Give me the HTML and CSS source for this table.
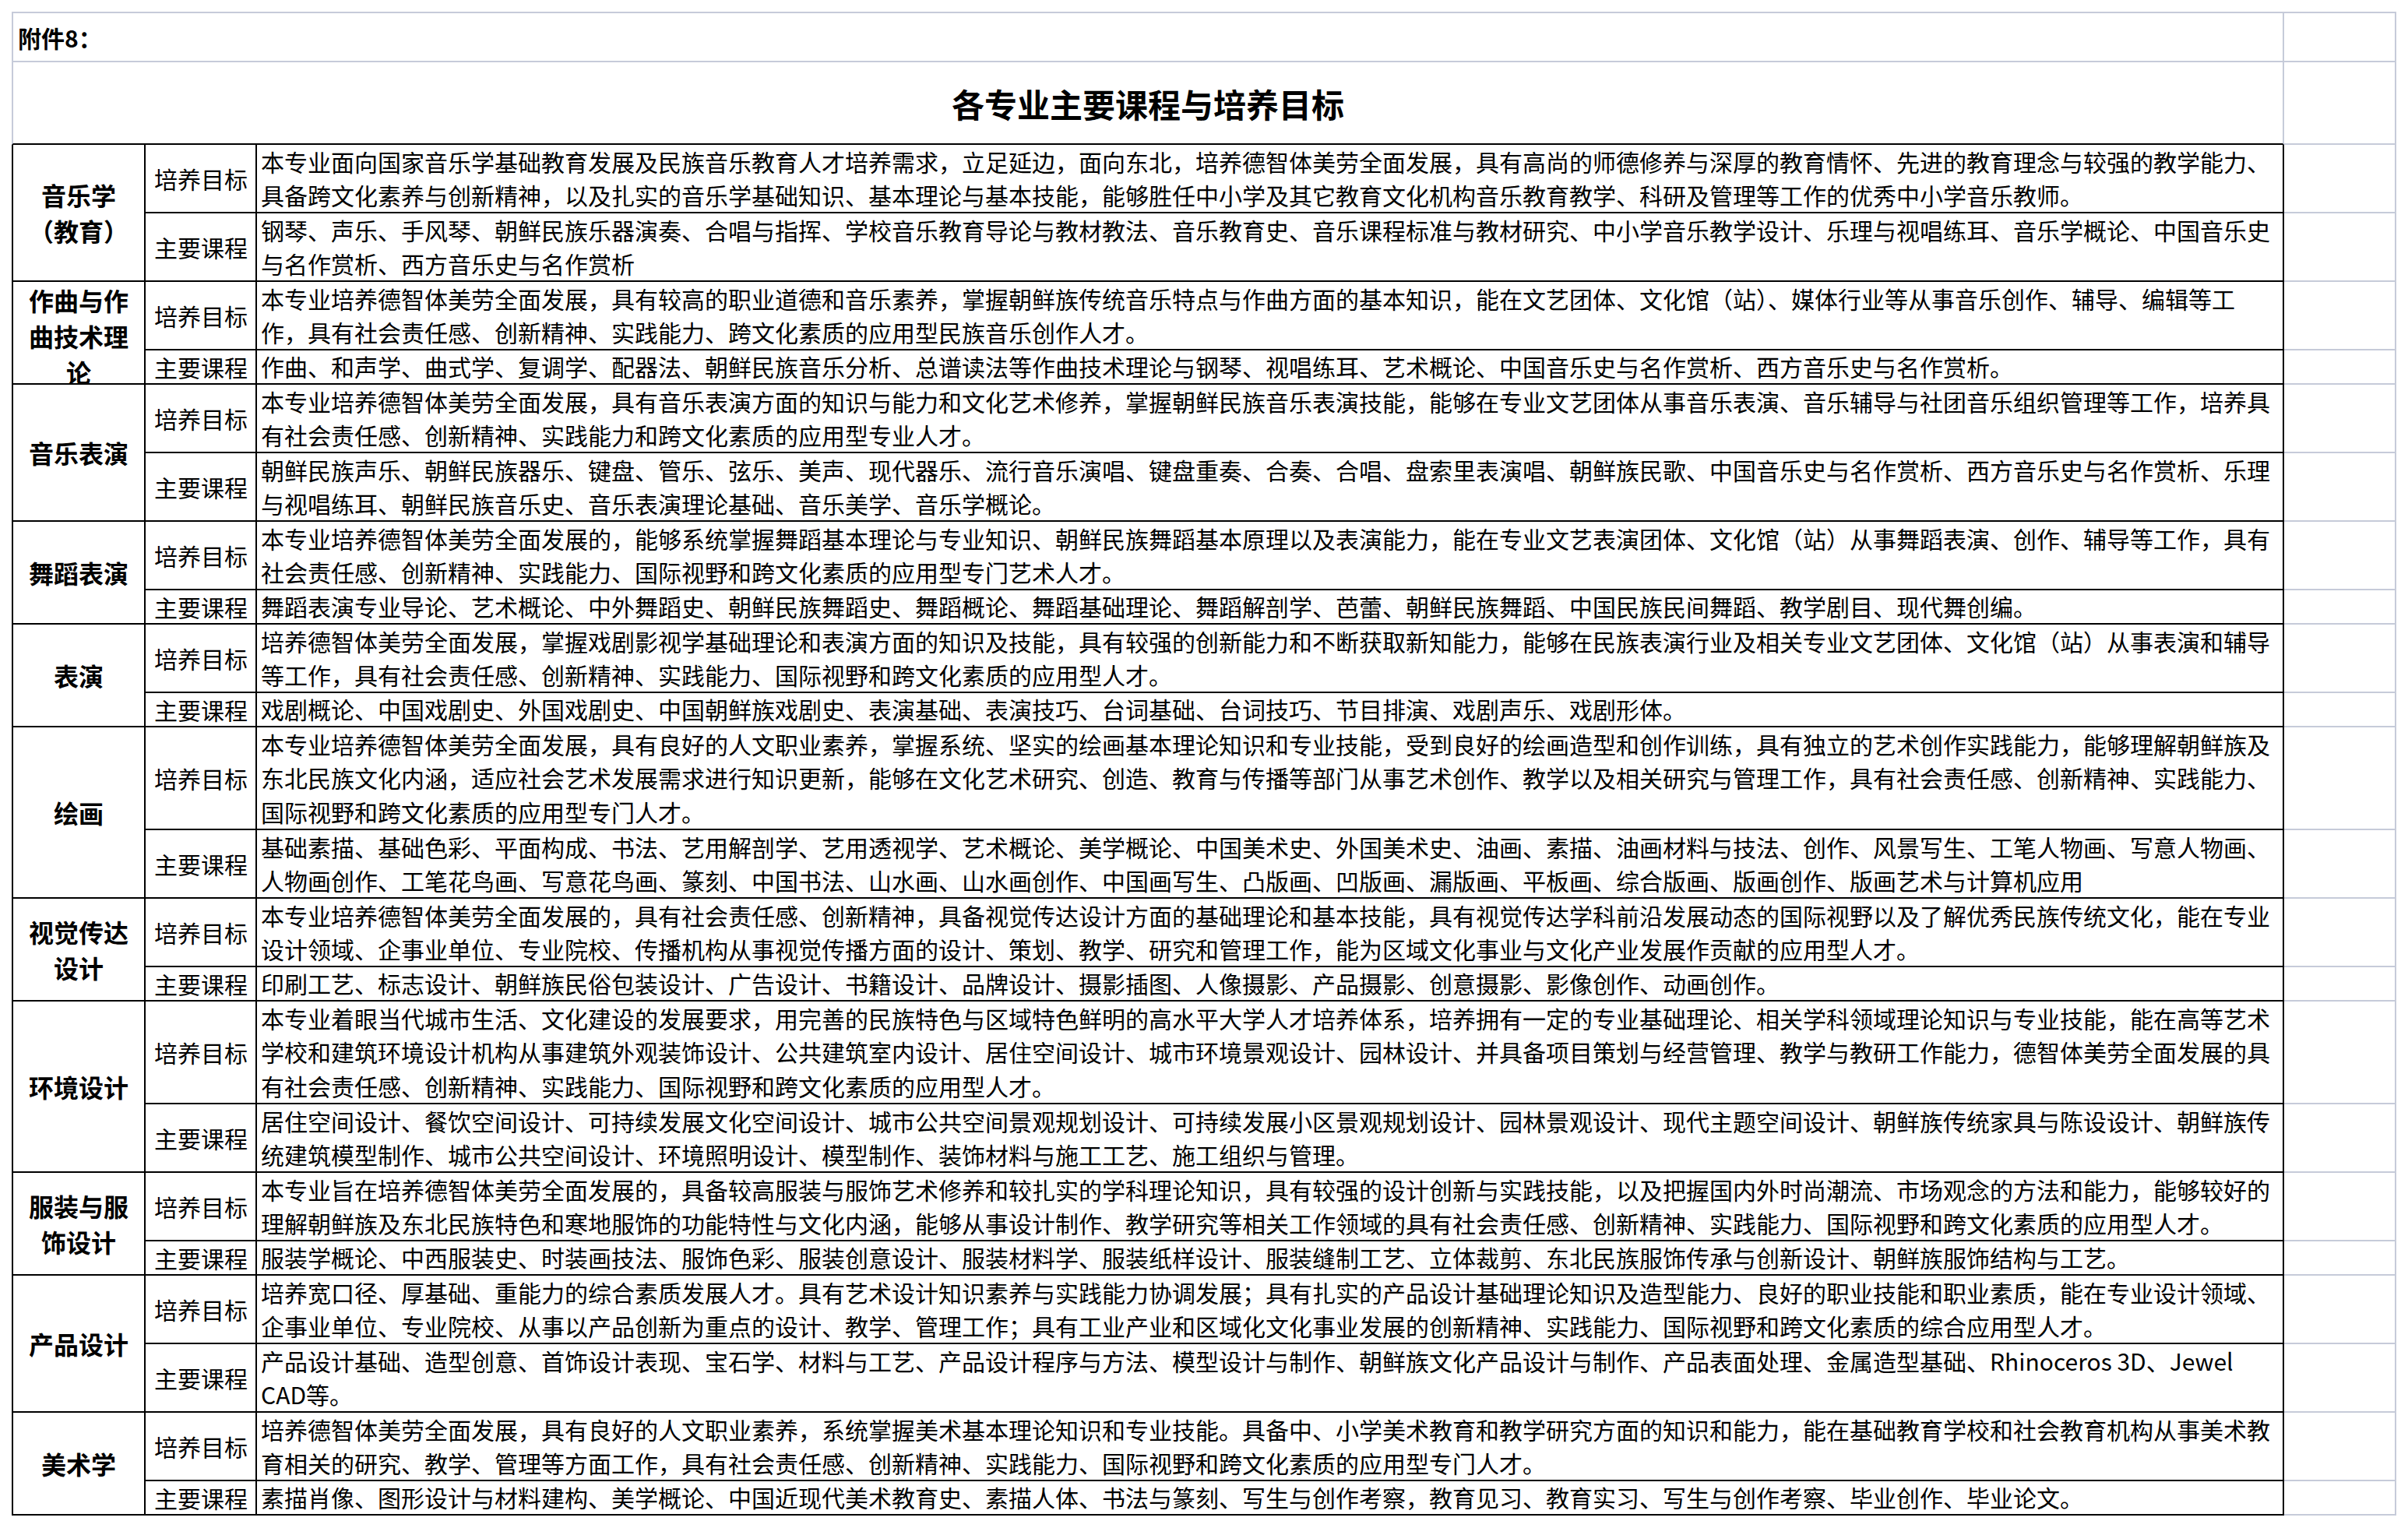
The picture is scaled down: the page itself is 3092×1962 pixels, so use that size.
FILE: index.html
```html
<!DOCTYPE html>
<html lang="zh-CN">
<head>
<meta charset="utf-8">
<title>各专业主要课程与培养目标</title>
<link rel="stylesheet" href="styles.css">
</head>
<body>
<div class="sheet">
  <div class="hdr top note">附件8：</div>
  <div class="x top"></div>
  <div class="hdr title">各专业主要课程与培养目标</div>
  <div class="x"></div>

  <div class="cat">音乐学<br>（教育）</div>
  <div class="lbl">培养目标</div>
  <div class="txt"><p>本专业面向国家音乐学基础教育发展及民族音乐教育人才培养需求，立足延边，面向东北，培养德智体美劳全面发展，具有高尚的师德修养与深厚的教育情怀、先进的教育理念与较强的教学能力、<br>具备跨文化素养与创新精神，以及扎实的音乐学基础知识、基本理论与基本技能，能够胜任中小学及其它教育文化机构音乐教育教学、科研及管理等工作的优秀中小学音乐教师。</p></div>
  <div class="x"></div>
  <div class="lbl">主要课程</div>
  <div class="txt"><p>钢琴、声乐、手风琴、朝鲜民族乐器演奏、合唱与指挥、学校音乐教育导论与教材教法、音乐教育史、音乐课程标准与教材研究、中小学音乐教学设计、乐理与视唱练耳、音乐学概论、中国音乐史<br>与名作赏析、西方音乐史与名作赏析</p></div>
  <div class="x"></div>

  <div class="cat clip">作曲与作<br>曲技术理<br>论</div>
  <div class="lbl">培养目标</div>
  <div class="txt"><p>本专业培养德智体美劳全面发展，具有较高的职业道德和音乐素养，掌握朝鲜族传统音乐特点与作曲方面的基本知识，能在文艺团体、文化馆（站）、媒体行业等从事音乐创作、辅导、编辑等工<br>作，具有社会责任感、创新精神、实践能力、跨文化素质的应用型民族音乐创作人才。</p></div>
  <div class="x"></div>
  <div class="lbl">主要课程</div>
  <div class="txt"><p>作曲、和声学、曲式学、复调学、配器法、朝鲜民族音乐分析、总谱读法等作曲技术理论与钢琴、视唱练耳、艺术概论、中国音乐史与名作赏析、西方音乐史与名作赏析。</p></div>
  <div class="x"></div>

  <div class="cat">音乐表演</div>
  <div class="lbl">培养目标</div>
  <div class="txt"><p>本专业培养德智体美劳全面发展，具有音乐表演方面的知识与能力和文化艺术修养，掌握朝鲜民族音乐表演技能，能够在专业文艺团体从事音乐表演、音乐辅导与社团音乐组织管理等工作，培养具<br>有社会责任感、创新精神、实践能力和跨文化素质的应用型专业人才。</p></div>
  <div class="x"></div>
  <div class="lbl">主要课程</div>
  <div class="txt"><p>朝鲜民族声乐、朝鲜民族器乐、键盘、管乐、弦乐、美声、现代器乐、流行音乐演唱、键盘重奏、合奏、合唱、盘索里表演唱、朝鲜族民歌、中国音乐史与名作赏析、西方音乐史与名作赏析、乐理<br>与视唱练耳、朝鲜民族音乐史、音乐表演理论基础、音乐美学、音乐学概论。</p></div>
  <div class="x"></div>

  <div class="cat">舞蹈表演</div>
  <div class="lbl">培养目标</div>
  <div class="txt"><p>本专业培养德智体美劳全面发展的，能够系统掌握舞蹈基本理论与专业知识、朝鲜民族舞蹈基本原理以及表演能力，能在专业文艺表演团体、文化馆（站）从事舞蹈表演、创作、辅导等工作，具有<br>社会责任感、创新精神、实践能力、国际视野和跨文化素质的应用型专门艺术人才。</p></div>
  <div class="x"></div>
  <div class="lbl">主要课程</div>
  <div class="txt"><p>舞蹈表演专业导论、艺术概论、中外舞蹈史、朝鲜民族舞蹈史、舞蹈概论、舞蹈基础理论、舞蹈解剖学、芭蕾、朝鲜民族舞蹈、中国民族民间舞蹈、教学剧目、现代舞创编。</p></div>
  <div class="x"></div>

  <div class="cat">表演</div>
  <div class="lbl">培养目标</div>
  <div class="txt"><p>培养德智体美劳全面发展，掌握戏剧影视学基础理论和表演方面的知识及技能，具有较强的创新能力和不断获取新知能力，能够在民族表演行业及相关专业文艺团体、文化馆（站）从事表演和辅导<br>等工作，具有社会责任感、创新精神、实践能力、国际视野和跨文化素质的应用型人才。</p></div>
  <div class="x"></div>
  <div class="lbl">主要课程</div>
  <div class="txt"><p>戏剧概论、中国戏剧史、外国戏剧史、中国朝鲜族戏剧史、表演基础、表演技巧、台词基础、台词技巧、节目排演、戏剧声乐、戏剧形体。</p></div>
  <div class="x"></div>

  <div class="cat">绘画</div>
  <div class="lbl">培养目标</div>
  <div class="txt"><p>本专业培养德智体美劳全面发展，具有良好的人文职业素养，掌握系统、坚实的绘画基本理论知识和专业技能，受到良好的绘画造型和创作训练，具有独立的艺术创作实践能力，能够理解朝鲜族及<br>东北民族文化内涵，适应社会艺术发展需求进行知识更新，能够在文化艺术研究、创造、教育与传播等部门从事艺术创作、教学以及相关研究与管理工作，具有社会责任感、创新精神、实践能力、<br>国际视野和跨文化素质的应用型专门人才。</p></div>
  <div class="x"></div>
  <div class="lbl">主要课程</div>
  <div class="txt"><p>基础素描、基础色彩、平面构成、书法、艺用解剖学、艺用透视学、艺术概论、美学概论、中国美术史、外国美术史、油画、素描、油画材料与技法、创作、风景写生、工笔人物画、写意人物画、<br>人物画创作、工笔花鸟画、写意花鸟画、篆刻、中国书法、山水画、山水画创作、中国画写生、凸版画、凹版画、漏版画、平板画、综合版画、版画创作、版画艺术与计算机应用</p></div>
  <div class="x"></div>

  <div class="cat">视觉传达<br>设计</div>
  <div class="lbl">培养目标</div>
  <div class="txt"><p>本专业培养德智体美劳全面发展的，具有社会责任感、创新精神，具备视觉传达设计方面的基础理论和基本技能，具有视觉传达学科前沿发展动态的国际视野以及了解优秀民族传统文化，能在专业<br>设计领域、企事业单位、专业院校、传播机构从事视觉传播方面的设计、策划、教学、研究和管理工作，能为区域文化事业与文化产业发展作贡献的应用型人才。</p></div>
  <div class="x"></div>
  <div class="lbl">主要课程</div>
  <div class="txt"><p>印刷工艺、标志设计、朝鲜族民俗包装设计、广告设计、书籍设计、品牌设计、摄影插图、人像摄影、产品摄影、创意摄影、影像创作、动画创作。</p></div>
  <div class="x"></div>

  <div class="cat">环境设计</div>
  <div class="lbl">培养目标</div>
  <div class="txt"><p>本专业着眼当代城市生活、文化建设的发展要求，用完善的民族特色与区域特色鲜明的高水平大学人才培养体系，培养拥有一定的专业基础理论、相关学科领域理论知识与专业技能，能在高等艺术<br>学校和建筑环境设计机构从事建筑外观装饰设计、公共建筑室内设计、居住空间设计、城市环境景观设计、园林设计、并具备项目策划与经营管理、教学与教研工作能力，德智体美劳全面发展的具<br>有社会责任感、创新精神、实践能力、国际视野和跨文化素质的应用型人才。</p></div>
  <div class="x"></div>
  <div class="lbl">主要课程</div>
  <div class="txt"><p>居住空间设计、餐饮空间设计、可持续发展文化空间设计、城市公共空间景观规划设计、可持续发展小区景观规划设计、园林景观设计、现代主题空间设计、朝鲜族传统家具与陈设设计、朝鲜族传<br>统建筑模型制作、城市公共空间设计、环境照明设计、模型制作、装饰材料与施工工艺、施工组织与管理。</p></div>
  <div class="x"></div>

  <div class="cat">服装与服<br>饰设计</div>
  <div class="lbl">培养目标</div>
  <div class="txt"><p>本专业旨在培养德智体美劳全面发展的，具备较高服装与服饰艺术修养和较扎实的学科理论知识，具有较强的设计创新与实践技能，以及把握国内外时尚潮流、市场观念的方法和能力，能够较好的<br>理解朝鲜族及东北民族特色和寒地服饰的功能特性与文化内涵，能够从事设计制作、教学研究等相关工作领域的具有社会责任感、创新精神、实践能力、国际视野和跨文化素质的应用型人才。</p></div>
  <div class="x"></div>
  <div class="lbl">主要课程</div>
  <div class="txt"><p>服装学概论、中西服装史、时装画技法、服饰色彩、服装创意设计、服装材料学、服装纸样设计、服装缝制工艺、立体裁剪、东北民族服饰传承与创新设计、朝鲜族服饰结构与工艺。</p></div>
  <div class="x"></div>

  <div class="cat">产品设计</div>
  <div class="lbl">培养目标</div>
  <div class="txt"><p>培养宽口径、厚基础、重能力的综合素质发展人才。具有艺术设计知识素养与实践能力协调发展；具有扎实的产品设计基础理论知识及造型能力、良好的职业技能和职业素质，能在专业设计领域、<br>企事业单位、专业院校、从事以产品创新为重点的设计、教学、管理工作；具有工业产业和区域化文化事业发展的创新精神、实践能力、国际视野和跨文化素质的综合应用型人才。</p></div>
  <div class="x"></div>
  <div class="lbl">主要课程</div>
  <div class="txt"><p>产品设计基础、造型创意、首饰设计表现、宝石学、材料与工艺、产品设计程序与方法、模型设计与制作、朝鲜族文化产品设计与制作、产品表面处理、金属造型基础、Rhinoceros 3D、Jewel<br>CAD等。</p></div>
  <div class="x"></div>

  <div class="cat">美术学</div>
  <div class="lbl">培养目标</div>
  <div class="txt"><p>培养德智体美劳全面发展，具有良好的人文职业素养，系统掌握美术基本理论知识和专业技能。具备中、小学美术教育和教学研究方面的知识和能力，能在基础教育学校和社会教育机构从事美术教<br>育相关的研究、教学、管理等方面工作，具有社会责任感、创新精神、实践能力、国际视野和跨文化素质的应用型专门人才。</p></div>
  <div class="x"></div>
  <div class="lbl">主要课程</div>
  <div class="txt"><p>素描肖像、图形设计与材料建构、美学概论、中国近现代美术教育史、素描人体、书法与篆刻、写生与创作考察，教育见习、教育实习、写生与创作考察、毕业创作、毕业论文。</p></div>
  <div class="x"></div>
</div>
</body>
</html>
```

FILE: styles.css
```css
* {
  box-sizing: border-box;
}

html, body {
  margin: 0;
  padding: 0;
  background: #ffffff;
}

body {
  font-family: "Noto Sans CJK SC", "Noto Sans", sans-serif;
  color: #000000;
  font-size: 30px;
}

.sheet {
  display: grid;
  margin: 15px 0 0 15px;
  width: 3062px;
  grid-template-columns: 172px 143px 2603px 144px;
  grid-template-rows:
    65px 106px
    88px 88px
    88px 44px
    88px 88px
    88px 44px
    88px 44px
    132px 88px
    88px 44px
    132px 88px
    88px 44px
    88px 88px
    88px 44px;
}

.hdr {
  grid-column: 1 / span 3;
  border-left: 2px solid #c6cbd9;
  border-right: 2px solid #c6cbd9;
  border-bottom: 2px solid #c6cbd9;
  display: flex;
  align-items: center;
}

.top {
  border-top: 2px solid #c6cbd9;
}

.note {
  font-weight: 700;
  font-size: 30px;
  padding-left: 6px;
}

.title {
  justify-content: center;
  font-weight: 700;
  font-size: 42px;
  border-bottom: 2px solid #000000;
}

.x {
  grid-column: 4;
  border-right: 2px solid #c6cbd9;
  border-bottom: 2px solid #c6cbd9;
}

.cat {
  grid-column: 1;
  grid-row: span 2;
  border-left: 2px solid #000000;
  border-right: 2px solid #000000;
  border-bottom: 2px solid #000000;
  display: flex;
  align-items: center;
  justify-content: center;
  text-align: center;
  font-weight: 700;
  font-size: 32px;
  line-height: 46px;
}

.clip {
  align-items: flex-start;
  overflow: hidden;
}

.lbl {
  grid-column: 2;
  border-right: 2px solid #000000;
  border-bottom: 2px solid #000000;
  display: flex;
  align-items: center;
  padding-left: 11px;
  white-space: nowrap;
}

.txt {
  grid-column: 3;
  border-right: 2px solid #000000;
  border-bottom: 2px solid #000000;
  display: flex;
  align-items: center;
  padding-left: 5px;
}

.txt p {
  margin: 0;
  line-height: 43.3px;
  white-space: nowrap;
}
```
